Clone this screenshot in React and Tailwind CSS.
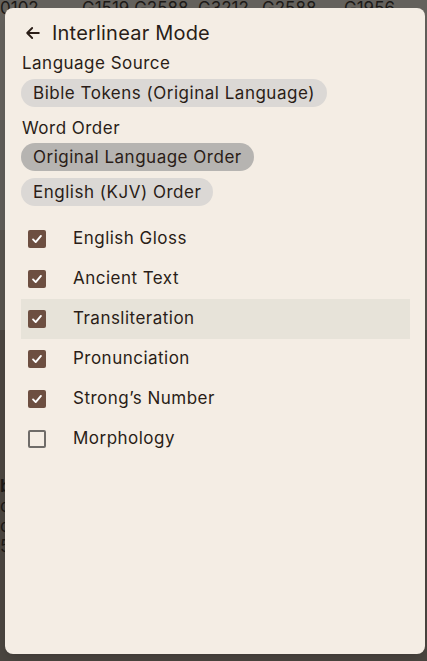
import React, { useState } from 'react';

const options = [
  { key: 'gloss', label: 'English Gloss', checked: true },
  { key: 'ancient', label: 'Ancient Text', checked: true },
  { key: 'translit', label: 'Transliteration', checked: true },
  { key: 'pron', label: 'Pronunciation', checked: true },
  { key: 'strongs', label: 'Strong\u2019s Number', checked: true },
  { key: 'morph', label: 'Morphology', checked: false },
];

const Check = ({ checked }) =>
  checked ? (
    <span className="flex h-[18px] w-[18px] items-center justify-center rounded-[2px] bg-[#6d4f41]">
      <svg viewBox="0 0 16 16" className="h-[14px] w-[14px]" fill="none" stroke="white" strokeWidth="2.2" strokeLinecap="round" strokeLinejoin="round">
        <path d="M3.5 8.5l3 3 6-7" />
      </svg>
    </span>
  ) : (
    <span className="h-[18px] w-[18px] rounded-[2px] border-2 border-[#6f6c69]"></span>
  );

const App = () => {
  const [order, setOrder] = useState('original');
  const [opts, setOpts] = useState(options);

  return (
    <div className="relative h-[661px] w-full overflow-hidden bg-[#4b4640] font-['Inter',sans-serif] text-[#2a1d17]">
      {/* page behind the overlay */}
      <div className="flex flex-col text-[17px] text-[#1d1a17]">
        <div className="flex h-[120px] bg-[#64615c] leading-[16px]">
          <span className="w-[82px]">0102</span>
          <span className="w-[116px]">G1519 G2588</span>
          <span className="w-[64px]">G3212</span>
          <span className="w-[82px]">G2588</span>
          <span>G1956</span>
        </div>
        <div className="h-[110px] bg-[#5f5c57]"></div>
        <div className="h-[100px] bg-[#57534d]"></div>
        <div className="flex h-[331px] flex-col justify-center bg-[#4b4640] pt-10 leading-[20px]">
          <span className="font-bold">b</span>
          <span>c</span>
          <span>c</span>
          <span>5</span>
        </div>
      </div>

      {/* modal */}
      <div className="absolute left-[5px] right-[2px] top-[8px] h-[646px] rounded-lg bg-[#f4ede4] px-4 pt-2 shadow-lg tracking-[0.03em]">
        <div className="flex items-center gap-[9px] pt-[3px] pl-[2px]">
          <svg viewBox="0 0 24 24" className="h-[20px] w-[20px]" fill="none" stroke="#2a1d17" strokeWidth="2.2" strokeLinecap="round" strokeLinejoin="round">
            <path d="M19 12H5M11 6l-6 6 6 6" />
          </svg>
          <h1 className="text-[20px] leading-[28px] font-normal tracking-[0.01em]">Interlinear Mode</h1>
        </div>

        <div className="pl-[1px] pt-[4px] text-[17px] leading-[24px]">Language Source</div>
        <div className="mt-[4px] flex">
          <button className="h-[28px] rounded-full bg-[#dbd8d5] px-3 text-[17px] leading-[28px] tracking-[0.03em]">
            Bible Tokens (Original Language)
          </button>
        </div>

        <div className="mt-[9px] pl-[1px] text-[17px] leading-[24px]">Word Order</div>
        <div className="mt-[3px] flex flex-col items-start gap-[7px]">
          <button
            onClick={() => setOrder('original')}
            className={`h-[28px] rounded-full px-3 text-[17px] leading-[28px] tracking-[0.03em] ${order === 'original' ? 'bg-[#b6b4b1]' : 'bg-[#dbd8d5]'}`}
          >
            Original Language Order
          </button>
          <button
            onClick={() => setOrder('kjv')}
            className={`h-[28px] rounded-full px-3 text-[17px] leading-[28px] tracking-[0.03em] ${order === 'kjv' ? 'bg-[#b6b4b1]' : 'bg-[#dbd8d5]'}`}
          >
            English (KJV) Order
          </button>
        </div>

        <div className="mt-[13px] mr-[-1px] flex flex-col">
          {opts.map((o) => (
            <label
              key={o.key}
              onClick={() => setOpts(opts.map((x) => (x.key === o.key ? { ...x, checked: !x.checked } : x)))}
              className={`flex h-[40px] cursor-pointer items-center pl-[7px] text-[17px] ${o.key === 'translit' ? 'bg-[#e7e3d9]' : ''}`}
            >
              <Check checked={o.checked} />
              <span className="ml-[27px]">{o.label}</span>
            </label>
          ))}
        </div>
      </div>
    </div>
  );
};

export default App;
